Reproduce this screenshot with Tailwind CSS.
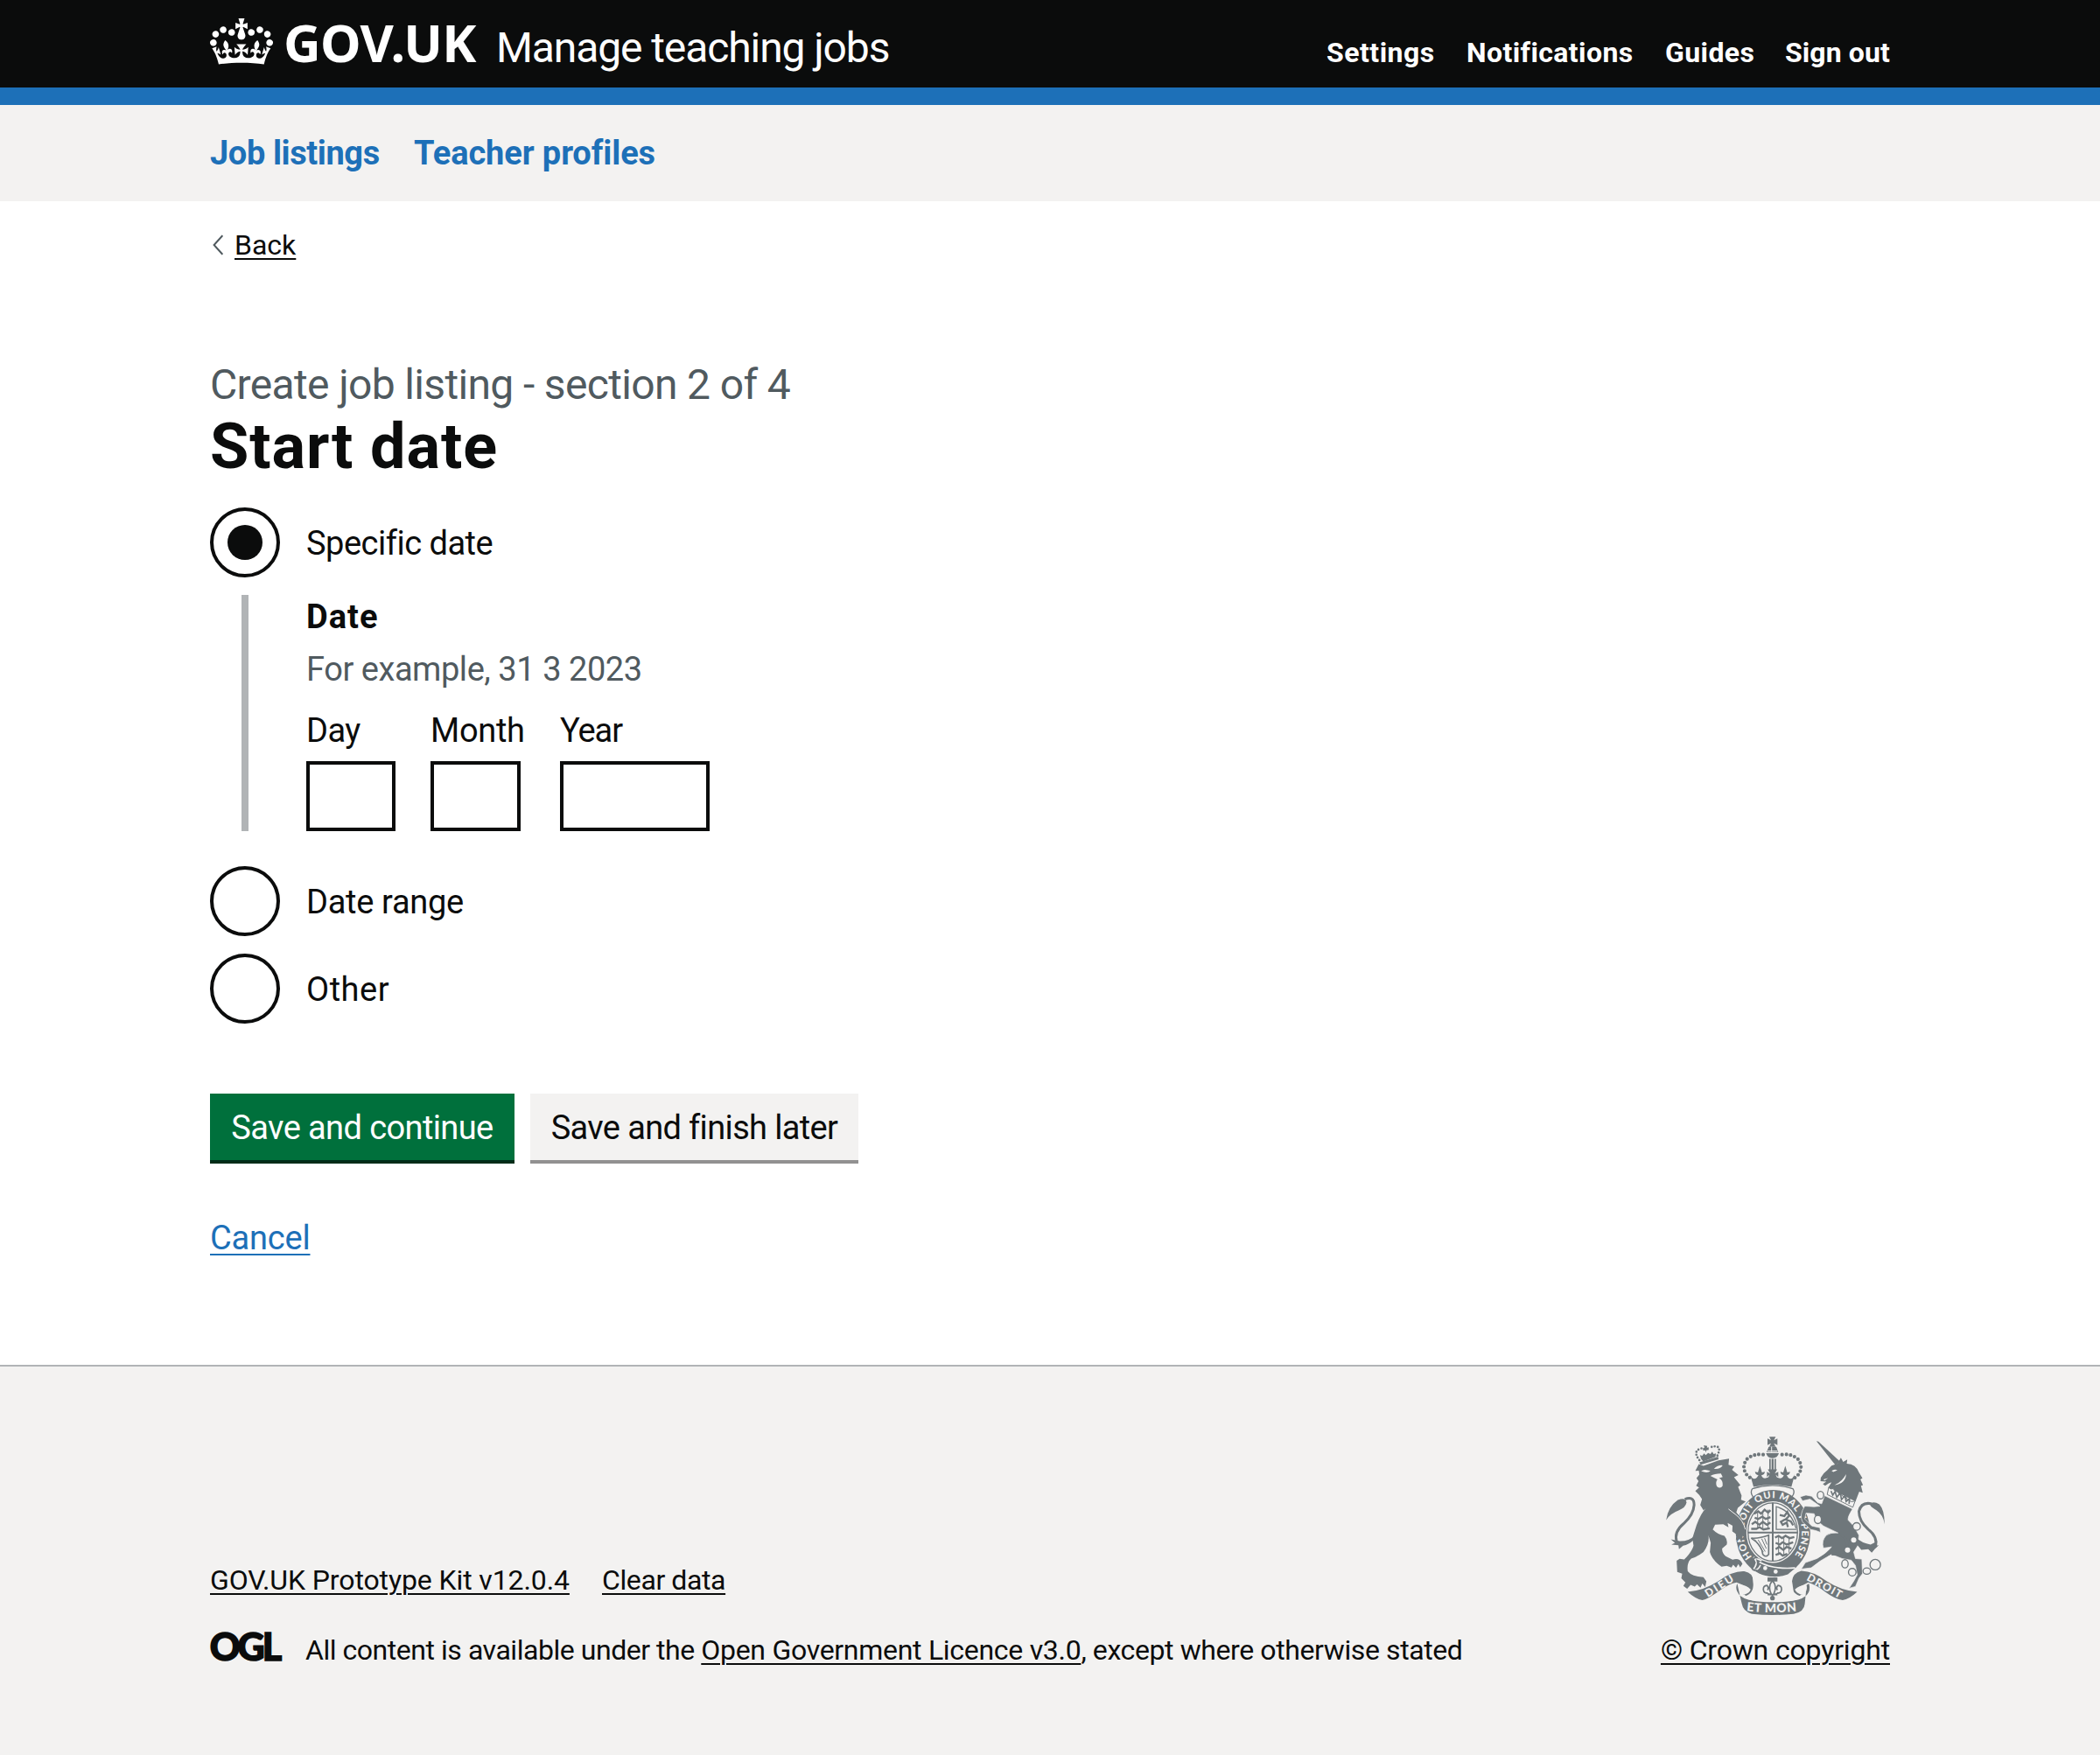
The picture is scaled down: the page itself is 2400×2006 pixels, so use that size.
<!DOCTYPE html>
<html lang="en">
<head>
<meta charset="utf-8">
<title>Start date - Manage teaching jobs</title>
<script src="https://cdn.jsdelivr.net/npm/@tailwindcss/browser@4"></script>
</head>
<body class="w-[2400px] min-h-[2006px] bg-[#f3f2f1] font-['Roboto',sans-serif] text-[#0b0c0c]">

<header class="bg-[#0b0c0c] h-[120px] border-b-20 border-[#1d70b8] text-white">
  <div class="w-[1920px] mx-auto h-[100px] flex items-baseline pt-[18px]">
    <a class="flex items-baseline">
      <svg class="w-[72px] h-[53px] self-start mt-[3px] mr-3 shrink-0" viewBox="0 0 132 97"><path fill="currentColor" fill-rule="evenodd" d="M25 30.2c3.5 1.5 7.7-.2 9.1-3.7 1.5-3.6-.2-7.8-3.9-9.2-3.6-1.4-7.6.3-9.1 3.9-1.4 3.5.3 7.5 3.9 9zM9 39.5c3.6 1.5 7.8-.2 9.2-3.7 1.5-3.6-.2-7.8-3.9-9.1-3.6-1.5-7.6.2-9.1 3.8-1.4 3.5.3 7.5 3.8 9zM4.4 57.2c3.5 1.5 7.7-.2 9.1-3.8 1.5-3.6-.2-7.7-3.9-9.1-3.5-1.5-7.6.3-9.1 3.8-1.4 3.5.3 7.6 3.9 9.1zm38.3-21.4c3.5 1.5 7.7-.2 9.1-3.8 1.5-3.6-.2-7.7-3.9-9.1-3.6-1.5-7.6.3-9.1 3.8-1.3 3.6.4 7.7 3.9 9.1zm64.4-5.6c-3.6 1.5-7.8-.2-9.1-3.7-1.5-3.6.2-7.8 3.8-9.2 3.6-1.4 7.7.3 9.2 3.9 1.3 3.5-.4 7.5-3.9 9zm15.9 9.3c-3.6 1.5-7.7-.2-9.1-3.7-1.5-3.6.2-7.8 3.7-9.1 3.6-1.5 7.7.2 9.2 3.8 1.5 3.5-.3 7.5-3.8 9zm4.7 17.7c-3.6 1.5-7.8-.2-9.2-3.8-1.5-3.6.2-7.7 3.9-9.1 3.6-1.5 7.7.3 9.2 3.8 1.3 3.5-.4 7.6-3.9 9.1zM89.3 35.8c-3.6 1.5-7.8-.2-9.2-3.8-1.4-3.6.2-7.7 3.9-9.1 3.6-1.5 7.7.3 9.2 3.8 1.4 3.6-.3 7.7-3.9 9.1zM69.7 17.7l8.9 4.7V9.3l-8.9 2.8c-.2-.3-.5-.6-.9-.9L72.4 0H59.6l3.5 11.2c-.3.3-.6.5-.9.9l-8.8-2.8v13.1l8.8-4.7c.3.3.6.7.9.9l-5 15.4v.1c-.2.8-.4 1.6-.4 2.4 0 4.1 3.1 7.5 7 8.1h.2c.3 0 .7.1 1 .1.4 0 .7 0 1-.1h.2c4-.6 7.1-4.1 7.1-8.1 0-.8-.1-1.7-.4-2.4V34l-5.1-15.4c.4-.2.7-.6 1-.9zM66 92.8c16.9 0 32.8 1.1 47.1 3.2 4-16.9 8.9-26.7 14-33.5l-9.6-3.4c1 4.9 1.1 7.2 0 10.2-1.5-1.4-3-4.3-4.2-8.7L108.6 76c2.8-2 5-3.2 7.5-3.3-4.4 9.4-10 11.9-13.6 11.2-4.3-.8-6.3-4.6-5.6-7.9 1-4.7 5.7-5.9 8-.5 4.3-8.7-3-11.4-7.6-8.8 7.1-7.2 7.9-13.5 2.1-21.1-8 6.1-8.1 12.3-4.5 20.8-4.7-5.4-12.1-2.5-9.5 6.2 3.4-5.2 7.9-2 7.2 3.1-.6 4.3-6.4 7.8-13.5 7.2-10.3-.9-10.9-8-11.2-13.8 2.5-.5 7.1 1.8 11 7.3L80.2 60c-4.1 4.4-8 5.3-12.3 5.4 1.4-4.4 8-11.6 8-11.6H55.5s6.4 7.2 7.9 11.6c-4.2-.1-8-1-12.3-5.4l1.4 16.4c3.9-5.5 8.5-7.7 10.9-7.3-.3 5.8-.9 12.8-11.1 13.8-7.2.6-12.9-2.9-13.5-7.2-.7-5 3.8-8.3 7.1-3.1 2.7-8.7-4.6-11.6-9.4-6.2 3.7-8.5 3.6-14.7-4.6-20.8-5.8 7.6-5 13.9 2.2 21.1-4.7-2.6-11.9.1-7.7 8.8 2.3-5.5 7.1-4.2 8.1.5.7 3.3-1.3 7.1-5.7 7.9-3.5.7-9-1.8-13.5-11.2 2.5.1 4.7 1.3 7.5 3.3l-4.7-15.4c-1.2 4.4-2.7 7.2-4.3 8.7-1.1-3-.9-5.3 0-10.2l-9.5 3.4c5 6.9 9.9 16.7 14 33.5 14.8-2.1 30.8-3.2 47.7-3.2z"/></svg>
      <span class="w-[243px] font-['Noto_Sans',sans-serif] font-bold text-[59px] leading-[60px] tracking-[-0.6px]">GOV.UK</span>
    </a>
    <span class="text-[48px] leading-none tracking-[-1.1px] whitespace-nowrap">Manage teaching jobs</span>
    <nav class="ml-auto w-[644px] grid grid-cols-[160px_227px_137px_auto] text-[32px] leading-10 font-bold whitespace-nowrap">
      <a class="tracking-[0.5px]">Settings</a>
      <a class="tracking-[0.4px]">Notifications</a>
      <a class="tracking-[0.4px]">Guides</a>
      <a class="tracking-[0.1px]">Sign out</a>
    </nav>
  </div>
</header>

<nav class="bg-[#f3f2f1] h-[110px]">
  <div class="w-[1920px] mx-auto h-full flex items-center text-[38px] leading-[50px] font-bold text-[#1d70b8]">
    <a class="w-[233px] tracking-[-0.4px]">Job listings</a>
    <a class="tracking-[-0.1px]">Teacher profiles</a>
  </div>
</nav>

<main class="bg-white h-[1330px]">
  <div class="w-[1920px] mx-auto pt-[30px]">
    <a class="flex items-center h-10">
      <svg class="w-3 h-6 ml-[3px] mr-[13px] shrink-0" viewBox="0 0 12 24" fill="none" stroke="#505a5f" stroke-width="2"><path d="M11.3 1.2 1.6 12l9.7 10.8"/></svg>
      <span class="text-[32px] leading-10 underline decoration-2 underline-offset-4">Back</span>
    </a>

    <h1 class="mt-[110px]">
      <span class="block text-[48px] leading-[60px] tracking-[-0.65px] text-[#505a5f]">Create job listing - section 2 of 4</span>
      <span class="block pt-px h-20 text-[72px] leading-[80px] tracking-[0.9px] font-bold">Start date</span>
    </h1>

    <form class="text-[38px] leading-[50px]">
      <label class="flex items-center mt-[30px]">
        <span class="size-20 rounded-full border-4 border-[#0b0c0c] flex items-center justify-center"><span class="size-10 rounded-full bg-[#0b0c0c]"></span></span>
        <span class="ml-[30px] pt-0.5 tracking-[-0.5px]">Specific date</span>
      </label>

      <fieldset class="mt-5 ml-9 h-[270px] border-l-8 border-[#b1b4b6] pl-[66px]">
        <div class="h-[50px] font-bold tracking-[1px]">Date</div>
        <div class="h-[70px] leading-[70px] tracking-[-0.45px] text-[#505a5f]">For example, 31 3 2023</div>
        <div class="flex gap-10 leading-[70px]">
          <label class="w-[102px]"><span class="block h-[70px] tracking-[-0.5px]">Day</span><input class="block w-[102px] h-20 bg-white border-4 border-[#0b0c0c]"></label>
          <label class="w-[108px]"><span class="block h-[70px] tracking-[-0.3px]">Month</span><input class="block w-[103px] h-20 bg-white border-4 border-[#0b0c0c]"></label>
          <label class="w-[171px]"><span class="block h-[70px] tracking-[-1.1px]">Year</span><input class="block w-[171px] h-20 bg-white border-4 border-[#0b0c0c]"></label>
        </div>
      </fieldset>

      <label class="flex items-center mt-10">
        <span class="size-20 rounded-full border-4 border-[#0b0c0c]"></span>
        <span class="ml-[30px] pt-0.5 tracking-[-0.3px]">Date range</span>
      </label>
      <label class="flex items-center mt-5">
        <span class="size-20 rounded-full border-4 border-[#0b0c0c]"></span>
        <span class="ml-[30px] pt-0.5 tracking-[0.5px]">Other</span>
      </label>

      <div class="mt-20 flex gap-[18px]">
        <button type="button" class="w-[348px] h-20 pt-0.5 bg-[#00703c] border-b-4 border-[#002d18] text-white tracking-[-0.6px] whitespace-nowrap">Save and continue</button>
        <button type="button" class="w-[375px] h-20 pt-0.5 bg-[#f3f2f1] border-b-4 border-[#929191] tracking-[-0.65px] whitespace-nowrap">Save and finish later</button>
      </div>
      <a class="inline-block mt-[60px] text-[#1d70b8] tracking-[-0.2px] underline decoration-2 underline-offset-5">Cancel</a>
    </form>
  </div>
</main>

<footer class="bg-[#f3f2f1] border-t-2 border-[#b1b4b6]">
  <div class="w-[1920px] mx-auto pt-20 pb-[100px] flex items-end justify-between text-[32px] leading-10 whitespace-nowrap">
    <div>
      <div class="flex">
        <a class="w-[448px]"><span class="tracking-[-0.11px] underline decoration-2 underline-offset-4">GOV.UK Prototype Kit v12.0.4</span></a>
        <a class="tracking-[-0.4px] underline decoration-2 underline-offset-4">Clear data</a>
      </div>
      <div class="mt-10 flex">
        <svg class="w-[82px] h-[34px] mr-[27px] overflow-visible" viewBox="0 0 82 34"><text y="32.4" x="-.3" textLength="79.5" lengthAdjust="spacingAndGlyphs" class="font-['Lato',sans-serif] font-black" font-size="43" letter-spacing="-3" fill="#0b0c0c" stroke="#0b0c0c" stroke-width="1.5">OGL</text></svg>
        <p><span class="tracking-[-0.46px]">All content is available under the </span><a class="tracking-[-0.29px] underline decoration-2 underline-offset-4">Open Government Licence v3.0</a><span class="tracking-[-0.4px]">, except where otherwise stated</span></p>
      </div>
    </div>

    <div class="flex flex-col items-center">
      <svg class="w-[250px] h-[204px] mb-5" viewBox="72 65 750 613" fill="#6f777b">
        <defs>
          <path id="motto" d="M367 478A100 118 0 1 1 502 485"/>
          <path id="mon" d="M348 664Q437 674 524 664"/>
        </defs>
        <!-- lion's crown -->
        <path d="M192 142l-4-13 8 2 6-8 6 6 8-8 8 4 6-8 5 8 8-2-2 12-42 16z"/>
        <g fill="none" stroke="#6f777b" stroke-width="8" stroke-dasharray="0 10.5" stroke-linecap="round"><path d="M186 146Q164 118 186 108Q198 102 206 110M248 130Q262 100 242 99Q228 98 220 106"/></g>
        <path d="M201 95l12 2-1 6 6-1v9l-8 1-1 8-3-8-7 1v-8l5-1z"/>
        <path d="M186 154L250 134l2 9-62 19z"/>
        <!-- lion -->
        <path d="M172 183L184 160 200 166 252 147 288 141 286 162 306 168 298 179 320 197 305 205 327 232 319 238 331 268 329 282 345 288 318 310 313 325 331 352 339 372 348 388 345 412 336 405 334 427 325 415 316 420 318 403 300 390 302 372 283 362 286 377 268 366 240 368 232 384Q250 402 272 406 284 420 280 436L264 450Q264 466 276 476L300 488Q324 480 334 502L326 514 320 503 312 516 302 505 296 515 280 509 262 512Q230 490 222 462L225 430 217 404Q222 432 200 462 180 478 158 484 142 498 146 528 160 546 200 548L210 562 206 582 196 570 190 584 178 573 170 580 156 574 144 588 131 578 138 566 124 552 127 536 110 530 108 492 118 485 134 487Q160 462 166 440L162 414 176 370Q192 326 208 312L200 318 189 300 195 280 186 266 172 252 185 240 175 234 183 218 176 208 186 196 184 182z"/>
        <path d="M192 184q10-8 22-3l10 2q-10 10-32 1zM236 176q14-14 30-12q-8 14-30 12zM224 200q14-8 36-8l6 12-12 4q14 8 12 26-8 12-20 2-6-14 2-24z" fill="#f3f2f1"/>
        <path d="M72 352Q78 306 112 283 140 272 142 292 138 310 116 318 84 330 72 352z"/>
        <path d="M136 280Q168 268 168 300 166 334 132 364 98 392 108 426" fill="none" stroke="#6f777b" stroke-width="9"/>
        <path d="M170 405Q150 425 118 424L88 418 102 430 90 436 114 438 116 452 130 440Q150 436 166 420z"/>
        <!-- royal crown -->
        <path d="M426 66h22l-6 12 12-6v22l-12-6 6 12h-22l6-12-12 6V72l12 6z"/>
        <path d="M424 100h26l7 18h-40z"/><path d="M434 100v18M420 115h34" stroke="#f3f2f1" stroke-width="3"/>
        <path d="M415 122h44q-4 17-22 17t-22-17z"/>
        <path d="M426 142h5v38h-5zM444 142h5v38h-5zM434 142h7v38h-7z"/>
        <g fill="none" stroke="#6f777b" stroke-width="12.5" stroke-dasharray="0 14.6" stroke-linecap="round"><path d="M405 127Q372 123 350 142 328 170 350 198L364 210"/><path d="M470 127Q502 123 524 142 546 170 524 198L510 210"/></g>
        <path d="M360 194L372 238Q437 222 502 238L514 194Q504 218 491 206L486 198Q497 196 497 186L488 188 481 166 474 188 464 186Q465 197 476 198 470 214 452 205L448 196 457 204V186L445 192 453 178H421L429 192 418 186V204L427 196 423 205Q404 214 399 198 410 197 411 186L401 188 394 166 387 188 377 186Q378 196 389 198L383 206Q370 218 360 194z"/>
        <path d="M368 244Q437 222 507 244 516 256 504 272M368 244Q359 256 370 272" fill="none" stroke="#6f777b" stroke-width="4"/>
        <!-- garter -->
        <ellipse cx="439" cy="397" rx="128" ry="149"/>
        <ellipse cx="438" cy="393" rx="91" ry="106" fill="#f3f2f1"/>
        <ellipse cx="438" cy="393" rx="85" ry="100" fill="none" stroke="#6f777b" stroke-width="4"/>
        <text font-size="33" font-weight="900" fill="#f3f2f1" class="font-['Lato',sans-serif]"><textPath href="#motto" textLength="515">HONI SOIT QUI MAL Y PENSE</textPath></text>
        <!-- quartered shield -->
        <path d="M353 395h170M438 292v200" stroke="#6f777b" stroke-width="6"/>
        <g fill="none" stroke="#6f777b" stroke-width="7">
          <path d="M374 330l14-8 10 8 12-14 12 10 8-8M376 344l12 4 14-8 12 8 16-6M366 366l12-8 14 10 12-10 14 10 12-8M364 382h18l10-6 14 8 22-4"/>
          <path d="M446 412l12-6 12 8 12-8 14 8 16-4M448 430l14 6 10-8 14 8 22-8M448 452l12-8 14 10 12-10 16 6M448 472l14-6 10 8 16-6"/>
          <path d="M386 322v60M404 320v60M422 316v66M458 408v64M476 408v66M494 408v56" stroke-width="3"/>
          <path d="M450 304V384H520M450 306Q500 318 518 380" stroke-width="4"/>
          <path d="M462 334l16 4 10-14 6 14-12 12 18 6 8 14M480 350l-14 8 6 10 14-8 4 16"/>
          <path d="M364 414Q392 416 424 404V470Q414 482 404 470 400 436 364 414z" stroke-width="5"/>
          <path d="M376 418l30 44M388 420l24 40M400 416l16 34M410 414l8 22" stroke-width="3"/>
        </g>
        <!-- buckle and strap -->
        <path d="M376 478L404 494Q440 520 520 512L490 538Q460 548 437 546 396 542 366 515z"/>
        <path d="M392 496Q440 522 515 516M400 492L372 480Q392 500 368 524Q388 526 396 506" fill="none" stroke="#f3f2f1" stroke-width="5"/>
        <path d="M386 482q-10-4-14 4t4 12q-14 6-10 18t18 8" fill="none" stroke="#6f777b" stroke-width="5"/>
        <circle cx="412" cy="517" r="7" fill="#f3f2f1"/><circle cx="448" cy="529" r="7" fill="#f3f2f1"/>
        <!-- lion's paw over the garter -->
        <path d="M284 310L318 332Q336 350 340 368L347 392 343 414 335 406 331 428 323 414 311 420 315 402 299 390 300 370z"/>
        <path d="M286 314L312 334Q336 352 344 384" fill="none" stroke="#f3f2f1" stroke-width="3"/>
        <!-- unicorn -->
        <path d="M588 81L595 82 668 150 654 164z"/>
        <path d="M603 206Q612 190 626 180L640 165 660 158 672 138 680 152 694 144 692 158Q724 160 734 188L746 208 739 212 748 232 741 234 747 258 735 254 722 288 628 241 640 222 630 226 618 234 610 228 622 220 602 218z"/>
        <path d="M640 183q10-8 20-2l-14 6zM650 232Q688 226 690 194 676 220 650 232zM612 212l16-4-12 8z" fill="#f3f2f1"/>
        <path d="M630 240l-5 24 88 44 8-22q-14 6-20-2-8 2-10-10-10 4-16-8-10 2-14-12-12 2-14-10-12 4-17-4z" fill="#f3f2f1" stroke="#6f777b" stroke-width="3"/>
        <path d="M638 252l6 14 8-12 6 20 12-16 4 24 12-14 4 20 12-10-2 18" fill="none" stroke="#6f777b" stroke-width="5"/>
        <path d="M616 268L712 314Q694 342 697 352L716 372 734 404 730 440 716 462 722 484 744 486 746 536 734 552 722 580 700 586 716 562 728 540 722 508 708 490 676 484 640 470Q600 490 570 516L536 520 550 498 590 484Q622 466 640 444L612 448Q604 424 622 404 636 394 662 396L612 372 588 352 580 330 552 328 548 348 572 372 600 378 602 394 586 388 568 384 540 358Q528 334 548 304L580 306 600 304 566 280 540 286 532 272 552 266 572 270 592 292 606 296z" stroke="#f3f2f1" stroke-width="2"/>
        <path d="M664 398Q694 412 694 440 690 468 640 470" fill="none" stroke="#6f777b" stroke-width="8"/>
        <path d="M822 366Q818 334 794 318 770 306 772 296 784 286 804 298 822 316 822 366z"/>
        <path d="M778 296Q742 288 734 322 734 356 766 384 800 410 790 444" fill="none" stroke="#6f777b" stroke-width="9"/>
        <path d="M722 410Q744 432 774 436L798 424 790 440 802 438 788 452 778 464 766 452 742 454Q728 436 720 430z"/>
        <!-- chain -->
        <g fill="none" stroke="#6f777b" stroke-width="4"><ellipse cx="602" cy="266" rx="11" ry="13" fill="#f3f2f1"/><ellipse cx="593" cy="350" rx="12" ry="14" fill="#f3f2f1"/><ellipse cx="726" cy="374" rx="13" ry="13" fill="#f3f2f1"/><ellipse cx="686" cy="502" rx="11" ry="14"/><circle cx="711" cy="531" r="13"/><ellipse cx="761" cy="527" rx="13" ry="11"/><circle cx="790" cy="505" r="18"/></g>
        <circle cx="716" cy="420" r="9" fill="#f3f2f1"/><circle cx="695" cy="455" r="9" fill="#f3f2f1"/>
        <!-- scrolls -->
        <path d="M146 598Q200 594 250 562 300 526 340 528 372 534 370 562 376 600 346 612L336 606Q352 590 338 576L314 566Q290 570 258 592 214 624 196 627 172 622 146 598z"/>
        <path d="M728 598Q674 594 624 562 580 528 536 526 506 534 504 562 498 600 530 612L540 606Q524 590 536 578L560 566Q586 574 618 598 650 622 678 627 702 622 728 598z"/>
        <path d="M316 570Q306 590 326 612 350 630 390 630H490Q530 630 552 612 570 596 562 570L550 578 552 600 548 640Q546 668 510 674 437 682 366 674 336 666 332 640L326 615z"/>
        <path d="M322 576Q344 572 362 590 360 602 340 608 318 600 322 576zM554 576Q530 574 514 590 518 602 536 608 560 600 554 576z" fill="#f3f2f1"/>
        <path d="M330 606Q350 632 437 632 528 632 548 606" fill="none" stroke="#f3f2f1" stroke-width="4"/>
        <path d="M380 560H504L510 600Q480 626 437 628 396 626 370 604z" fill="#f3f2f1"/>
        <g fill="#f3f2f1" font-weight="900" class="font-['Lato',sans-serif]">
          <text x="215" y="618" font-size="37" transform="rotate(-32 215 618)" textLength="108">DIEU</text>
          <text x="552" y="557" font-size="37" transform="rotate(29 552 557)" textLength="132">DROIT</text>
          <text font-size="42"><textPath href="#mon" textLength="172">ET MON</textPath></text>
        </g>
        <!-- fleur-de-lis -->
        <path d="M420 549h34v14h-34z"/>
        <path d="M437 560Q420 578 432 604 426 610 418 602 408 604 406 592 404 578 418 576 426 584 420 592M437 560Q454 578 442 604 448 610 456 602 466 604 468 592 470 578 456 576 448 584 454 592M420 608h34M437 610v14" fill="none" stroke="#6f777b" stroke-width="5"/><circle cx="437" cy="620" r="8"/>
      </svg>
      <a class="tracking-[-0.17px] underline decoration-2 underline-offset-4">© Crown copyright</a>
    </div>
  </div>
</footer>
</body>
</html>
